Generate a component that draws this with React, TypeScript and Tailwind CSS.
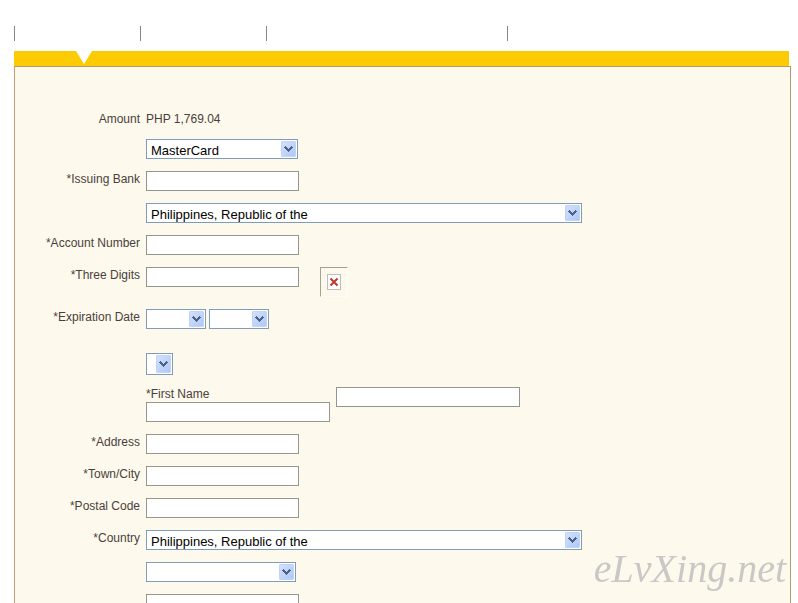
import React from 'react';

interface SelectBoxProps {
  id: string;
  label: string;
  className: string;
  options?: string[];
}

const SelectBox: React.FC<SelectBoxProps> = ({ id, label, className, options = [''] }) => (
  <div className={`relative ${className}`}>
    <select
      id={id}
      aria-label={label}
      className="block w-full h-full appearance-none rounded-none border border-[#7f9db9] bg-white pt-[3px] pl-1 pr-5 text-[13px] leading-4 text-black outline-none"
    >
      {options.map((option) => (
        <option key={option}>{option}</option>
      ))}
    </select>
    <span className="pointer-events-none absolute top-[2px] right-[2px] bottom-[2px] flex w-[15px] items-center justify-center rounded-[1px] border border-[#c3d3f7] bg-linear-to-br from-[#d3e1fd] to-[#b0c8f6]">
      <svg width="9" height="7" viewBox="0 0 9 7" shapeRendering="crispEdges" className="shrink-0" aria-hidden="true">
        <path
          d="M1 0h1v1h1v1h1v1h1v-1h1v-1h1v-1h1v1h1v1h-1v1h-1v1h-1v1h-1v1h-1v-1h-1v-1h-1v-1h-1v-1h-1v-1h1z"
          fill="#4d6185"
        />
      </svg>
    </span>
  </div>
);

interface TextBoxProps {
  id: string;
  label?: string;
  className?: string;
}

const TextBox: React.FC<TextBoxProps> = ({ id, label, className = 'w-[153px]' }) => (
  <input
    id={id}
    type="text"
    aria-label={label}
    className={`block h-5 border border-[#96968c] bg-white px-1 text-[13px] text-black outline-none ${className}`}
  />
);

interface RowProps {
  label?: string;
  htmlFor?: string;
  children: React.ReactNode;
}

const Row: React.FC<RowProps> = ({ label, htmlFor, children }) => (
  <div className="grid grid-cols-[125px_1fr] items-start gap-x-[6px]">
    {label ? (
      <label htmlFor={htmlFor} className="text-right">
        {label}
      </label>
    ) : (
      <span />
    )}
    {children}
  </div>
);

// Placeholder frame shown when the card hint picture is missing
const MissingPicture: React.FC = () => (
  <div className="flex h-[30px] w-7 items-center justify-center border border-t-[#a5a294] border-l-[#a5a294] border-r-[#fffdf5] border-b-[#fffdf5]">
    <svg width="14" height="16" viewBox="0 0 14 16" role="img" aria-label="Three digits help">
      <rect x="0.5" y="0.5" width="13" height="15" fill="#fff" stroke="#bdbdbd" />
      <path d="M3.5 4.5l7 7M10.5 4.5l-7 7" stroke="#c0392b" strokeWidth="2" />
    </svg>
  </div>
);

const countries = ['Philippines, Republic of the'];

const App: React.FC = () => {
  return (
    <div className="min-h-screen bg-white pt-[26px] pr-[7px] pl-[14px] font-['Liberation_Sans',Arial,sans-serif] text-xs leading-4 text-[#4a3f3c]">
      {/* Steps */}
      <header>
        <div className="grid h-[15px] grid-cols-[126px_126px_241px_1fr]">
          <div className="border-l border-[#858585]" />
          <div className="border-l border-[#858585]" />
          <div className="border-l border-[#858585]" />
          <div className="border-l border-[#858585]" />
        </div>
        <div className="mt-[10px] mr-[2px] h-[15px] bg-[#fdcb04] pl-[62px]">
          <svg width="16" height="13" viewBox="0 0 16 13" aria-hidden="true">
            <path d="M0 0h16L8 13z" fill="#fff" />
          </svg>
        </div>
      </header>

      {/* Payment form */}
      <main className="border border-b-0 border-[#b39c6b] border-l-[#c99b76] bg-[#fdf9ec] pt-[44px]">
        <form className="flex flex-col gap-3">
          <Row label="Amount" htmlFor="amount">
            <output id="amount">PHP 1,769.04</output>
          </Row>
          <Row>
            <SelectBox id="card" label="Card type" className="h-5 w-[152px]" options={['MasterCard']} />
          </Row>
          <Row label="*Issuing Bank" htmlFor="bank">
            <TextBox id="bank" />
          </Row>
          <Row>
            <SelectBox id="bank-country" label="Bank country" className="h-5 w-[436px]" options={countries} />
          </Row>
          <Row label="*Account Number" htmlFor="account">
            <TextBox id="account" />
          </Row>
          <Row label="*Three Digits" htmlFor="digits">
            <div className="flex items-start gap-[21px]">
              <TextBox id="digits" />
              <MissingPicture />
            </div>
          </Row>
          <Row label="*Expiration Date" htmlFor="month">
            <div className="flex gap-[3px]">
              <SelectBox id="month" label="Expiration month" className="h-5 w-[60px]" />
              <SelectBox id="year" label="Expiration year" className="h-5 w-[60px]" />
            </div>
          </Row>
          <div className="mt-3">
            <Row>
              <SelectBox id="title" label="Title" className="h-[22px] w-[27px]" />
            </Row>
          </div>
          <Row>
            <div className="flex items-start gap-[6px]">
              <div className="w-[184px]">
                <label htmlFor="first-name" className="block leading-[15px]">
                  *First Name
                </label>
                <TextBox id="first-name" className="w-full" />
              </div>
              <TextBox id="last-name" label="Last name" className="w-[184px]" />
            </div>
          </Row>
          <Row label="*Address" htmlFor="address">
            <TextBox id="address" />
          </Row>
          <Row label="*Town/City" htmlFor="city">
            <TextBox id="city" />
          </Row>
          <Row label="*Postal Code" htmlFor="postal">
            <TextBox id="postal" />
          </Row>
          <Row label="*Country" htmlFor="country">
            <SelectBox id="country" label="Country" className="h-5 w-[436px]" options={countries} />
          </Row>
          <Row>
            <SelectBox id="state" label="State" className="h-5 w-[150px]" />
          </Row>
          <Row>
            <TextBox id="phone" label="Phone" />
          </Row>
        </form>
      </main>

      <div className="pointer-events-none fixed right-3 bottom-3 font-['Liberation_Serif',serif] text-[40px] leading-[44px] text-[#c9c8c6] italic">
        eLvXing.net
      </div>
    </div>
  );
};

export default App;
